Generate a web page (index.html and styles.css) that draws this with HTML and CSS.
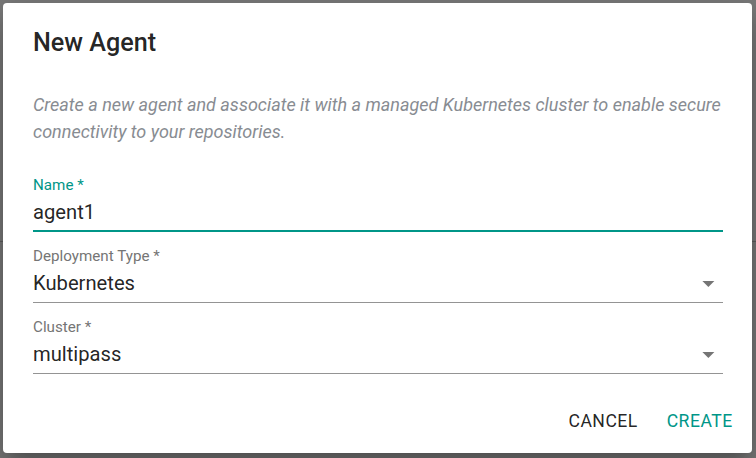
FILE: index.html
```html
<!DOCTYPE html>
<html>
<head>
<meta charset="utf-8">
<title>New Agent</title>
<link rel="stylesheet" href="styles.css">
</head>
<body>
<div class="backdrop">
  <div class="dialog">
    <h2 class="dialog-title">New Agent</h2>
    <p class="dialog-text">Create a new agent and associate it with a managed Kubernetes cluster to enable secure connectivity to your repositories.</p>
    <div class="field focused">
      <label class="field-label">Name *</label>
      <div class="field-row"><span class="field-value">agent1</span></div>
    </div>
    <div class="field">
      <label class="field-label">Deployment Type *</label>
      <div class="field-row">
        <span class="field-value">Kubernetes</span>
        <svg class="arrow" viewBox="0 0 24 24"><path d="M7 10l5 5 5-5z"/></svg>
      </div>
    </div>
    <div class="field">
      <label class="field-label">Cluster *</label>
      <div class="field-row">
        <span class="field-value">multipass</span>
        <svg class="arrow" viewBox="0 0 24 24"><path d="M7 10l5 5 5-5z"/></svg>
      </div>
    </div>
    <div class="actions">
      <button class="btn">Cancel</button>
      <button class="btn primary">Create</button>
    </div>
  </div>
</div>
</body>
</html>
```
FILE: styles.css
```css
html, body {
  margin: 0;
  padding: 0;
}
body {
  width: 756px;
  height: 458px;
  overflow: hidden;
  font-family: Roboto, "Liberation Sans", sans-serif;
  background: #7a7a7a;
}
.backdrop {
  width: 756px;
  height: 458px;
  padding: 3px 0 0 3px;
  box-sizing: border-box;
  background: linear-gradient(to bottom, transparent 241px, #5f5f5f 241px, #5f5f5f 242px, transparent 242px);
}
.dialog {
  width: 749px;
  height: 450px;
  box-sizing: border-box;
  background: #fff;
  border-radius: 4px;
  box-shadow: 0 11px 15px -7px rgba(0,0,0,.2), 0 24px 38px 3px rgba(0,0,0,.14), 0 9px 46px 8px rgba(0,0,0,.12);
  display: flex;
  flex-direction: column;
  padding: 0 29px 0 30px;
}
.dialog-title {
  margin: 24px 0 0;
  font-size: 25.2px;
  font-weight: 500;
  line-height: 32px;
  color: rgba(0,0,0,.87);
}
.dialog-text {
  margin: 32px 0 0;
  font-size: 18px;
  font-style: italic;
  line-height: 27px;
  color: #888c92;
}
.field {
  margin-top: 32px;
  border-bottom: 1px solid #949494;
  padding-bottom: 7px;
}
.field + .field {
  margin-top: 16px;
}
.field.focused {
  border-bottom: 2px solid #009688;
  padding-bottom: 6px;
}
.field-label {
  display: block;
  font-size: 15.2px;
  line-height: 17px;
  color: #757575;
}
.focused .field-label {
  color: #009688;
}
.field-row {
  margin-top: 6px;
  height: 24px;
  display: flex;
  align-items: center;
  justify-content: space-between;
}
.field-value {
  font-size: 20.2px;
  line-height: 24px;
  color: rgba(0,0,0,.87);
}
.arrow {
  width: 28.8px;
  height: 28.8px;
  fill: #757575;
  flex: none;
}
.actions {
  margin-top: auto;
  margin-right: -19.4px;
  padding: 9.6px 0;
  display: flex;
  justify-content: flex-end;
  gap: 9.6px;
}
.btn {
  font-family: Roboto, "Liberation Sans", sans-serif;
  font-size: 17.6px;
  font-weight: 400;
  line-height: 29.4px;
  letter-spacing: 0.5px;
  text-transform: uppercase;
  padding: 7.2px 9.6px;
  border: 0;
  background: transparent;
  color: rgba(0,0,0,.87);
  border-radius: 4px;
}
.btn.primary {
  color: #009688;
}
```
